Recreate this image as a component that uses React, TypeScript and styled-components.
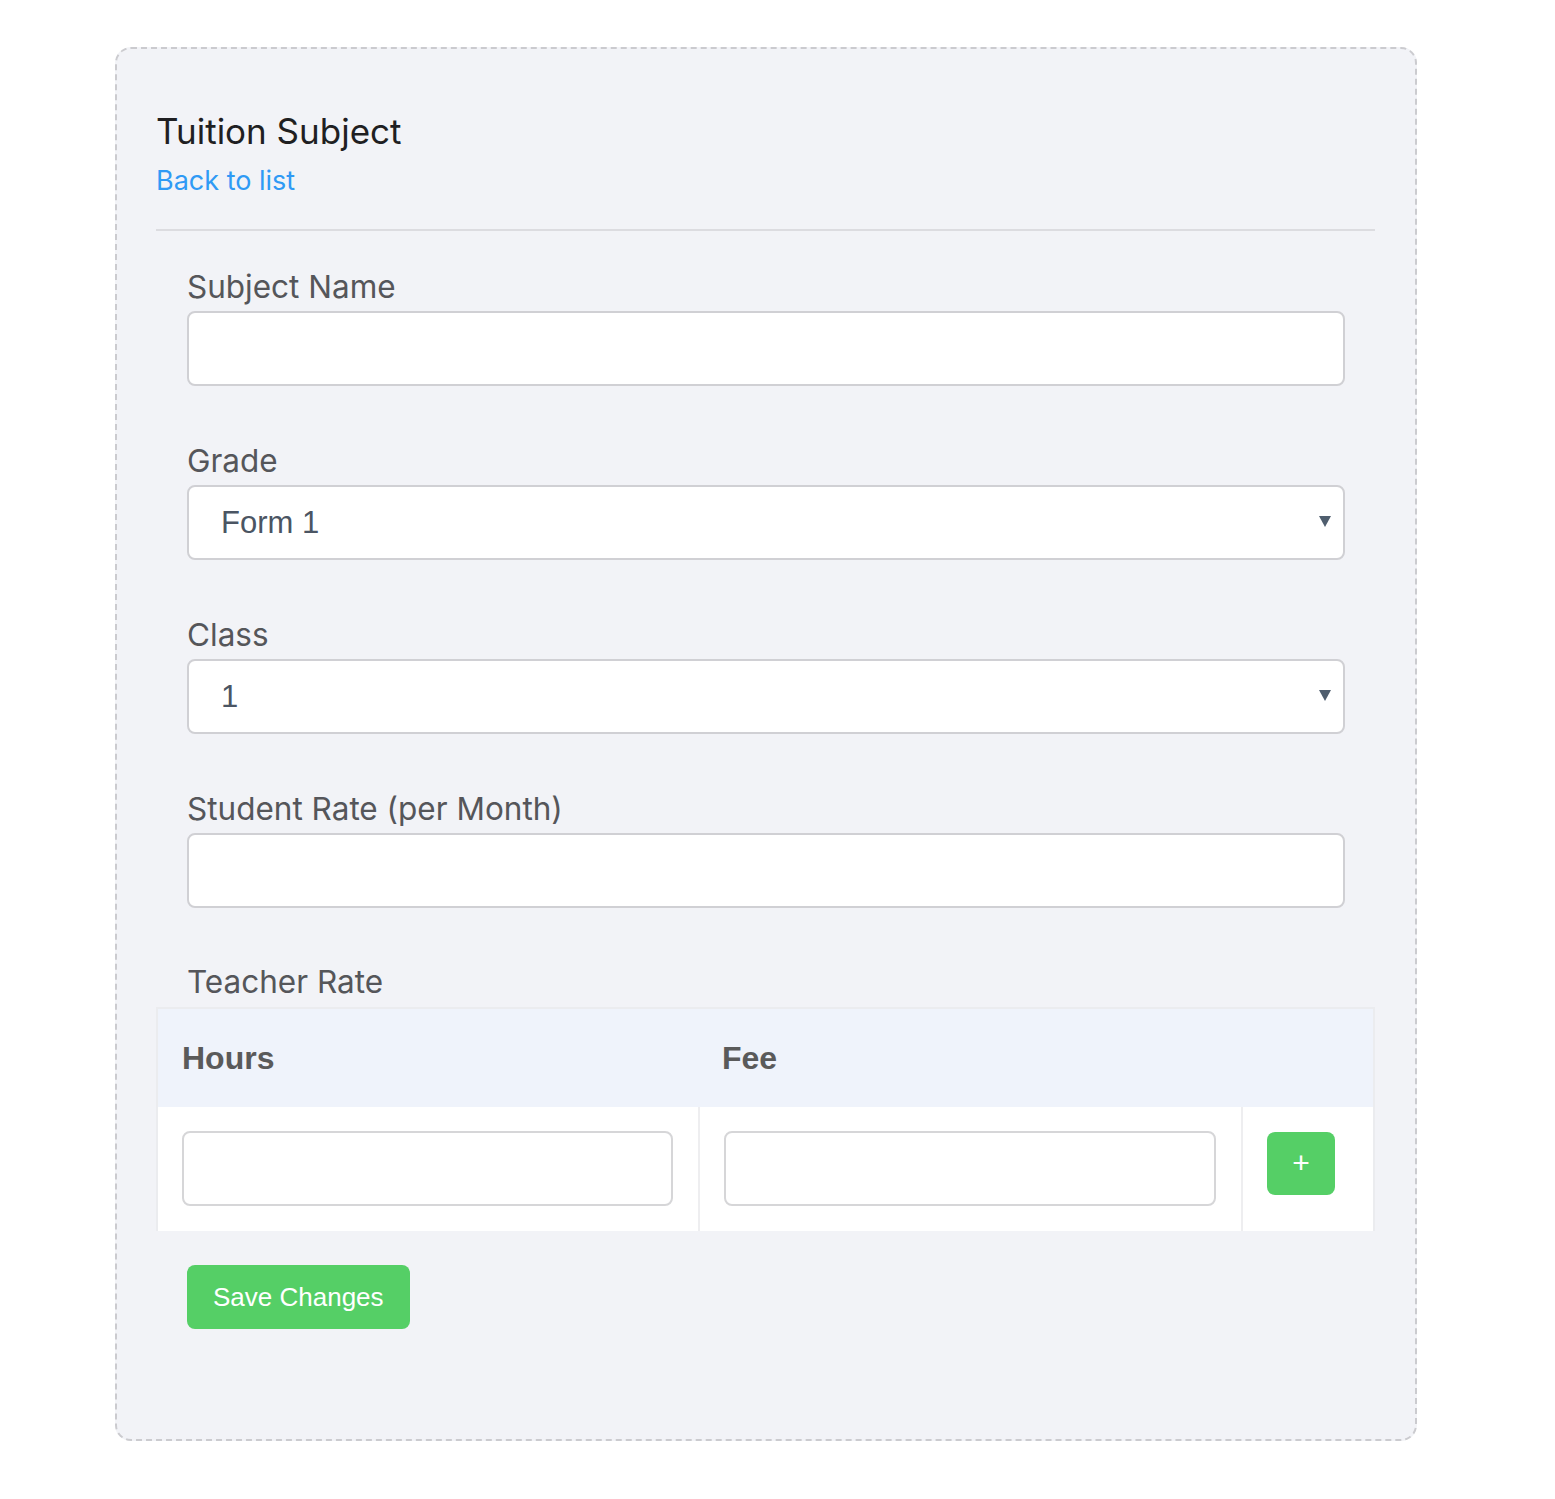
import React from "react";
import styled, { createGlobalStyle } from "styled-components";

const Global = createGlobalStyle`
  html, body { margin: 0; padding: 0; background: #ffffff; }
  * { box-sizing: border-box; }
`;

const Page = styled.div`
  padding: 47px 0 58px 115px;
`;

const Card = styled.div`
  width: 1302px;
  height: 1394px;
  border: 2px dashed #cbcbcf;
  border-radius: 16px;
  background: #f2f3f7;
  padding: 0 40px 0 39px;
  display: flex;
  flex-direction: column;
`;

const Header = styled.div`
  padding-top: 60px;
  padding-bottom: 30px;
  border-bottom: 2px solid #dcdce0;
`;

const Title = styled.h1`
  margin: 0;
  font-family: Inter, "Open Sans", sans-serif;
  font-weight: 400;
  font-size: 35px;
  line-height: 44px;
  color: #1f1f22;
`;

const BackLink = styled.a`
  display: inline-block;
  margin-top: 10px;
  font-family: Inter, "Open Sans", sans-serif;
  font-size: 27px;
  line-height: 36px;
  color: #2f9af5;
  text-decoration: none;
`;

const Group = styled.div<{ top: number }>`
  padding: 0 30px 0 31px;
  margin-top: ${(p) => p.top}px;
`;

const Label = styled.label`
  display: block;
  font-family: Inter, "Open Sans", sans-serif;
  font-size: 31.5px;
  line-height: 36px;
  color: #55565a;
  margin-bottom: 6px;
`;

const TextInput = styled.div`
  height: 75px;
  background: #fff;
  border: 2px solid #d0d0d4;
  border-radius: 8px;
`;

const Select = styled.div`
  height: 75px;
  background: #fff;
  border: 2px solid #d0d0d4;
  border-radius: 8px;
  display: flex;
  align-items: center;
  justify-content: space-between;
  padding: 0 12px 0 32px;
  font-family: "Liberation Sans", Arial, sans-serif;
  font-size: 31px;
  color: #4b5563;
`;

const Caret = styled.span`
  width: 0;
  height: 0;
  border-left: 6px solid transparent;
  border-right: 6px solid transparent;
  border-top: 11px solid #4f5e6e;
  margin-top: -2px;
`;

const TeacherLabel = styled(Label)`
  padding: 0 31px;
  margin: 56px 0 7px;
`;

const Table = styled.div`
  display: grid;
  grid-template-columns: 540px 543px 1fr;
  border: 2px solid #ebecef;
  border-bottom: none;
  background: #fff;
`;

const HeadCell = styled.div`
  background: #eff3fb;
  height: 98px;
  display: flex;
  align-items: center;
  padding-left: 24px;
  font-family: "Liberation Sans", Arial, sans-serif;
  font-weight: 700;
  font-size: 32px;
  color: #5a5a5a;
`;

const BodyCell = styled.div<{ first?: boolean }>`
  height: 124px;
  padding: 24px 25px 0 24px;
  border-left: ${(p) => (p.first ? "none" : "2px solid #eeeef0")};
`;

const CellInput = styled.div`
  height: 75px;
  background: #fff;
  border: 2px solid #d6d6d8;
  border-radius: 8px;
`;

const PlusButton = styled.button`
  width: 68px;
  height: 63px;
  border: none;
  border-radius: 8px;
  background: #55cf66;
  color: #fff;
  font-family: "Liberation Sans", Arial, sans-serif;
  font-size: 30px;
  display: flex;
  align-items: center;
  justify-content: center;
  padding: 0 0 2px;
  margin-top: 1px;
`;

const Footer = styled.div`
  padding: 34px 31px 0;
`;

const SaveButton = styled.button`
  height: 64px;
  padding: 0 26px;
  border: none;
  border-radius: 8px;
  background: #55cf66;
  color: #fff;
  font-family: "Liberation Sans", Arial, sans-serif;
  font-size: 26px;
`;

export default function App() {
  return (
    <>
      <Global />
      <Page>
        <Card>
          <Header>
            <Title>Tuition Subject</Title>
            <BackLink href="#">Back to list</BackLink>
          </Header>
          <Group top={38}>
            <Label>Subject Name</Label>
            <TextInput />
          </Group>
          <Group top={57}>
            <Label>Grade</Label>
            <Select>
              <span>Form 1</span>
              <Caret />
            </Select>
          </Group>
          <Group top={57}>
            <Label>Class</Label>
            <Select>
              <span>1</span>
              <Caret />
            </Select>
          </Group>
          <Group top={57}>
            <Label>Student Rate (per Month)</Label>
            <TextInput />
          </Group>
          <TeacherLabel>Teacher Rate</TeacherLabel>
          <Table>
            <HeadCell>Hours</HeadCell>
            <HeadCell>Fee</HeadCell>
            <HeadCell />
            <BodyCell first>
              <CellInput />
            </BodyCell>
            <BodyCell>
              <CellInput />
            </BodyCell>
            <BodyCell>
              <PlusButton>+</PlusButton>
            </BodyCell>
          </Table>
          <Footer>
            <SaveButton>Save Changes</SaveButton>
          </Footer>
        </Card>
      </Page>
    </>
  );
}
